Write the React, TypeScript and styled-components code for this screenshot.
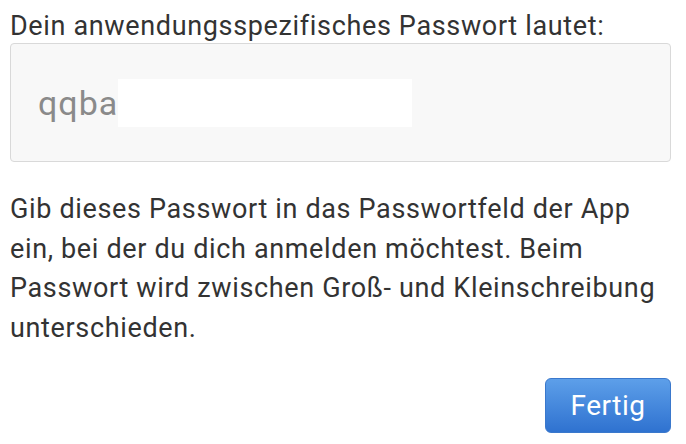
import React from "react";
import styled, { createGlobalStyle } from "styled-components";

const GlobalStyle = createGlobalStyle`
  html, body {
    margin: 0;
    padding: 0;
    background: #ffffff;
  }
  body {
    font-family: Roboto, "Liberation Sans", sans-serif;
    color: #333333;
  }
`;

const App: React.FC = () => {
  return (
    <>
      <GlobalStyle />
      <Page>
        <Heading>Dein anwendungsspezifisches Passwort lautet:</Heading>
        <PasswordBox>
          <PasswordText>qqba</PasswordText>
          <Redaction />
        </PasswordBox>
        <Hint>
          Gib dieses Passwort in das Passwortfeld der App
          <br />
          ein, bei der du dich anmelden möchtest. Beim
          <br />
          Passwort wird zwischen Groß- und Kleinschreibung
          <br />
          unterschieden.
        </Hint>
        <Actions>
          <DoneButton type="button">Fertig</DoneButton>
        </Actions>
      </Page>
    </>
  );
};

const Page = styled.div`
  width: 686px;
  height: 444px;
  box-sizing: border-box;
  padding: 9px 15px 0 10px;
  display: flex;
  flex-direction: column;
`;

const Heading = styled.p`
  margin: 0;
  font-size: 27px;
  line-height: 34px;
  letter-spacing: 0.65px;
  color: #333;
`;

const PasswordBox = styled.div`
  height: 119px;
  box-sizing: border-box;
  background: #f8f8f8;
  border: 1px solid #d9d9d9;
  border-radius: 4px;
  display: flex;
  align-items: center;
  padding-left: 27px;
`;

const PasswordText = styled.span`
  font-size: 34px;
  letter-spacing: 1px;
  color: #8a8a8a;
`;

const Redaction = styled.div`
  width: 294px;
  height: 48px;
  background: #ffffff;
`;

const Hint = styled.p`
  margin: 28px 0 0;
  font-size: 27px;
  line-height: 39.5px;
  letter-spacing: 0.65px;
  color: #333;
  white-space: nowrap;
`;

const Actions = styled.div`
  display: flex;
  justify-content: flex-end;
  margin-top: 30px;
`;

const DoneButton = styled.button`
  width: 126px;
  height: 55px;
  border: 1px solid #3a78cc;
  border-radius: 6px;
  background: linear-gradient(#5d9fe9, #2f72d0);
  color: #ffffff;
  font-family: Roboto, "Liberation Sans", sans-serif;
  font-size: 28px;
  letter-spacing: 0.5px;
  cursor: pointer;
`;

export default App;
